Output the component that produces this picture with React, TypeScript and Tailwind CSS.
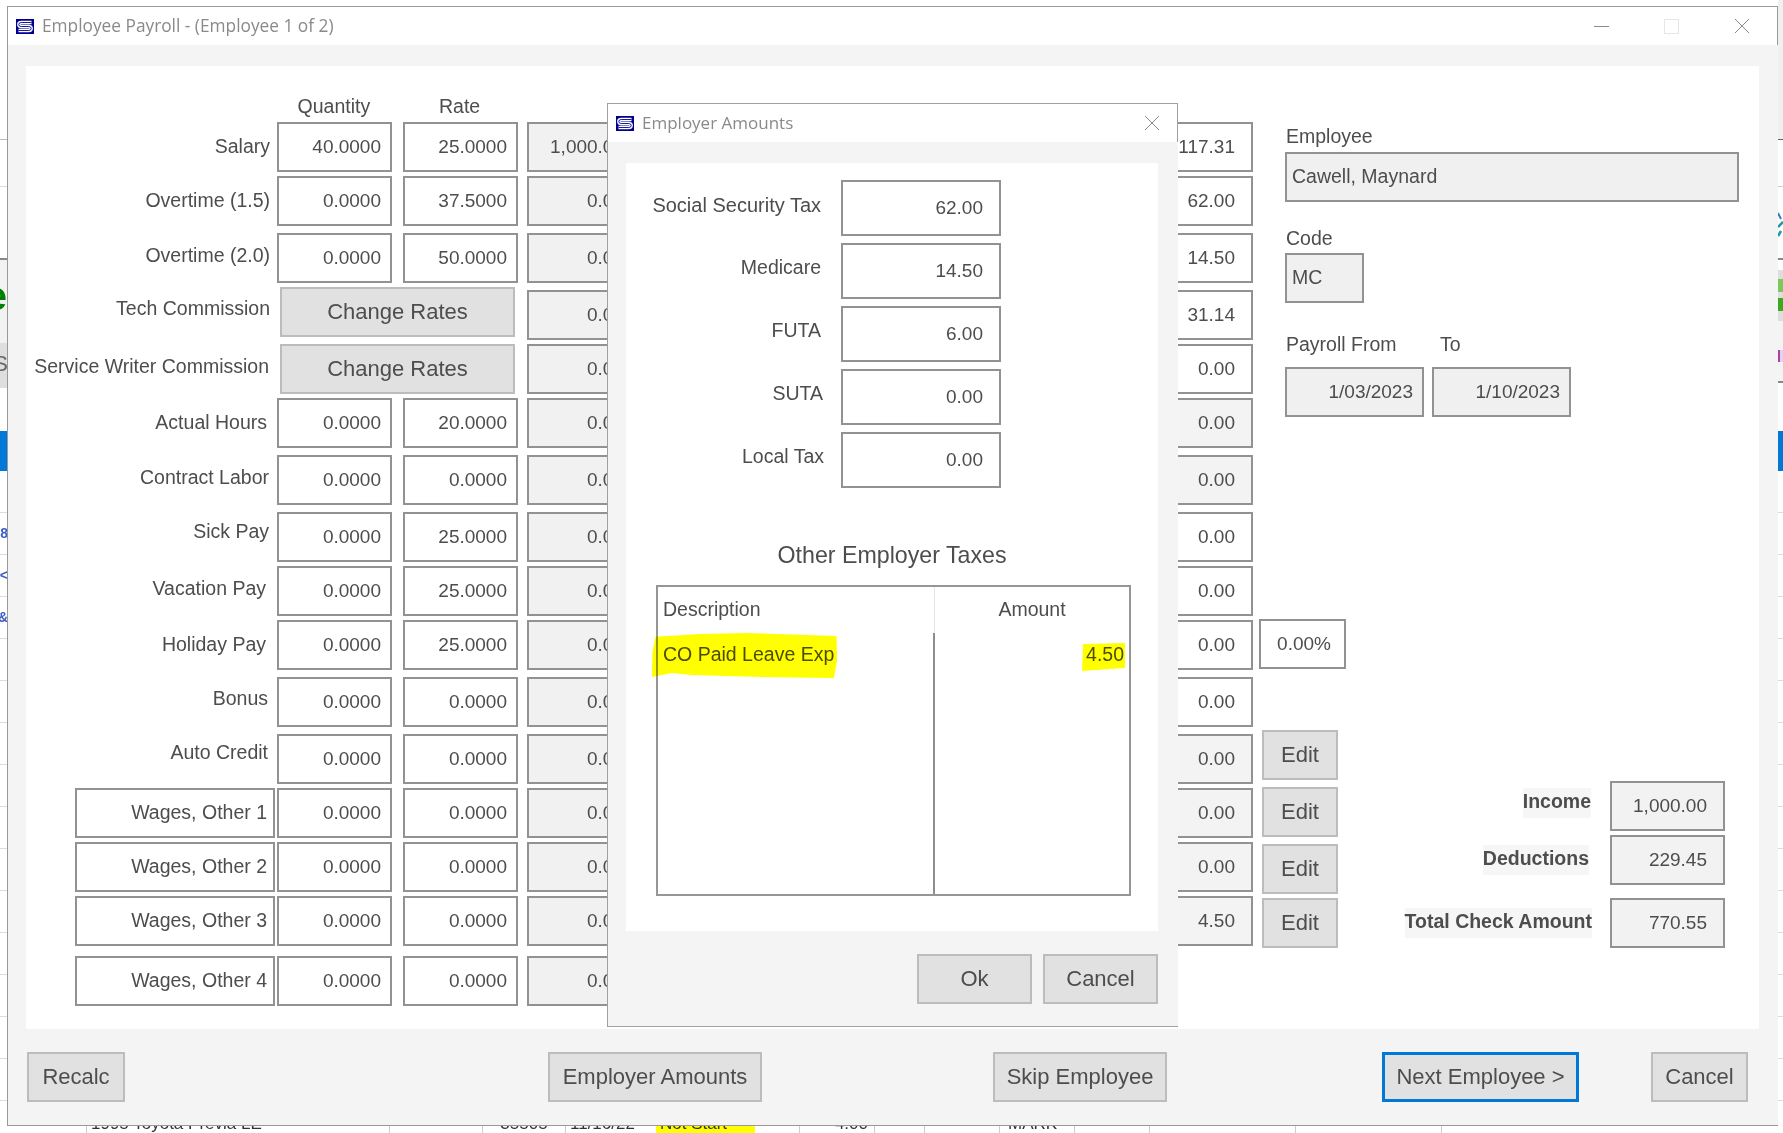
import type { ReactNode } from "react";

const TOP_GAPS = [
  "",
  "mt-[4px]",
  "mt-[7px]",
  "mt-[7px]",
  "mt-[4px]",
  "mt-[4px]",
  "mt-[7px]",
  "mt-[7px]",
  "mt-[4px]",
  "mt-[4px]",
  "mt-[7px]",
  "mt-[7px]",
  "mt-[4px]",
  "mt-[4px]",
  "mt-[4px]",
  "mt-[10px]",
];

interface PayRow {
  label: string;
  qty?: string;
  rate?: string;
  gap: string;
  labelClass: string;
  boxed?: boolean;
}

const PAY_ROWS: PayRow[] = [
  { label: "Salary", qty: "40.0000", rate: "25.0000", gap: "", labelClass: "pr-[7px]" },
  { label: "Overtime (1.5)", qty: "0.0000", rate: "37.5000", gap: "mt-[4px]", labelClass: "pr-[7px]" },
  { label: "Overtime (2.0)", qty: "0.0000", rate: "50.0000", gap: "mt-[7px]", labelClass: "pr-[7px] pb-[4px]" },
  { label: "Tech Commission", gap: "mt-[4px]", labelClass: "pr-[7px] pb-[6px]" },
  { label: "Service Writer Commission", gap: "mt-[7px]", labelClass: "pr-[8px] pb-[4px]" },
  { label: "Actual Hours", qty: "0.0000", rate: "20.0000", gap: "mt-[4px]", labelClass: "pr-[10px]" },
  { label: "Contract Labor", qty: "0.0000", rate: "0.0000", gap: "mt-[7px]", labelClass: "pr-[8px] pb-[4px]" },
  { label: "Sick Pay", qty: "0.0000", rate: "25.0000", gap: "mt-[7px]", labelClass: "pr-[8px] pb-[10px]" },
  { label: "Vacation Pay", qty: "0.0000", rate: "25.0000", gap: "mt-[4px]", labelClass: "pr-[11px] pb-[4px]" },
  { label: "Holiday Pay", qty: "0.0000", rate: "25.0000", gap: "mt-[4px]", labelClass: "pr-[11px]" },
  { label: "Bonus", qty: "0.0000", rate: "0.0000", gap: "mt-[7px]", labelClass: "pr-[9px] pb-[6px]" },
  { label: "Auto Credit", qty: "0.0000", rate: "0.0000", gap: "mt-[7px]", labelClass: "pr-[9px] pb-[12px]" },
  { label: "Wages, Other 1", qty: "0.0000", rate: "0.0000", gap: "mt-[4px]", labelClass: "", boxed: true },
  { label: "Wages, Other 2", qty: "0.0000", rate: "0.0000", gap: "mt-[4px]", labelClass: "", boxed: true },
  { label: "Wages, Other 3", qty: "0.0000", rate: "0.0000", gap: "mt-[4px]", labelClass: "", boxed: true },
  { label: "Wages, Other 4", qty: "0.0000", rate: "0.0000", gap: "mt-[10px]", labelClass: "", boxed: true },
];

const RIGHT_AMOUNTS = ["117.31", "62.00", "14.50", "31.14", "0.00", "0.00", "0.00", "0.00", "0.00", "0.00", "0.00", "0.00", "0.00", "0.00", "4.50"];

const DIALOG_FIELDS = [
  { label: "Social Security Tax", value: "62.00", labelClass: "pr-[20px] text-[20px]" },
  { label: "Medicare", value: "14.50", labelClass: "pr-[20px]" },
  { label: "FUTA", value: "6.00", labelClass: "pr-[20px]" },
  { label: "SUTA", value: "0.00", labelClass: "pr-[18px]" },
  { label: "Local Tax", value: "0.00", labelClass: "pr-[17px]" },
];

const STRIP_LINES = Array.from({ length: 15 }, (_, i) => i);

function LogoIcon() {
  return (
    <svg viewBox="0 0 18 15" width="18" height="15" className="shrink-0">
      <rect width="18" height="15" fill="#000090" />
      <path d="M15.5 3.5H5.2Q2.8 3.5 2.8 5.5T5.2 7.5H12.8Q15.2 7.5 15.2 9.5T12.8 11.5H2.5" fill="none" stroke="#fff" strokeWidth="3.4" />
      <path d="M15.5 3.5H5.2Q2.8 3.5 2.8 5.5T5.2 7.5H12.8Q15.2 7.5 15.2 9.5T12.8 11.5H2.5" fill="none" stroke="#000090" strokeWidth="0.9" />
    </svg>
  );
}

function CloseIcon() {
  return (
    <svg viewBox="0 0 16 16" width="16" height="16" className="shrink-0">
      <path d="M1 1L15 15M15 1L1 15" fill="none" stroke="#8a8a8a" strokeWidth="1" />
    </svg>
  );
}

function Box({ children, className = "" }: { children?: ReactNode; className?: string }) {
  return (
    <div className={`h-[50px] shrink-0 border-2 border-[#929292] flex items-center text-[19px] text-[#4d4d4d] ${className}`}>
      {children}
    </div>
  );
}

function Btn({ children, className = "" }: { children: ReactNode; className?: string }) {
  return (
    <div className={`h-[50px] shrink-0 border-2 border-[#bcbcbc] bg-[#e1e1e1] flex items-center justify-center pb-[2px] text-[22px] text-[#4d4d4d] ${className}`}>
      {children}
    </div>
  );
}

function Backdrop() {
  return (
    <div className="flex h-[1133px] w-[1783px]">
      {/* Left sliver of the job list behind the window */}
      <div className="w-[8px] shrink-0 flex flex-col overflow-hidden">
        <div className="h-[140px] shrink-0 border-b border-[#bbb]" />
        <div className="h-[47px] shrink-0 border-b border-[#ddd]" />
        <div className="h-[73px] shrink-0 border-b-2 border-[#888]" />
        <div className="h-[83px] shrink-0 bg-[#f2f2f2] flex justify-end pt-[16px] pr-[1px] text-[40px] leading-[40px] font-bold text-[#008000]">e</div>
        <div className="h-[45px] shrink-0 bg-[#dedede] flex justify-end pt-[6px] text-[22px] leading-[30px] text-[#666]">S</div>
        <div className="h-[43px] shrink-0" />
        <div className="h-[40px] shrink-0 bg-[#0078d7]" />
        <div className="h-[42px] shrink-0 border-b border-[#ddd]" />
        {STRIP_LINES.map((i) => (
          <div key={i} className="h-[42px] shrink-0 border-b border-[#ddd] flex items-center justify-end text-[14px] font-bold text-[#3b5cc4]">
            {i === 0 ? "8" : i === 1 ? "<" : i === 2 ? "&" : ""}
          </div>
        ))}
      </div>

      {/* Table row showing under the window */}
      <div className="flex-1 pt-[1103px] flex items-start text-[17px] text-[#333]">
        <div className="w-[78px] h-[42px] shrink-0" />
        <div className="w-[303px] h-[42px] shrink-0 border-l border-[#ccc] flex items-center pl-[4px]">1995 Toyota Previa LE</div>
        <div className="w-[93px] h-[42px] shrink-0 border-l border-[#ccc]" />
        <div className="w-[83px] h-[42px] shrink-0 border-l border-[#ccc] flex items-center justify-center">35505</div>
        <div className="w-[91px] h-[42px] shrink-0 border-l border-[#ccc] flex items-center pl-[4px]">11/16/22</div>
        <div className="w-[99px] h-[42px] shrink-0 bg-[#ffff00] flex items-center pl-[4px]">Not Start</div>
        <div className="w-[44px] h-[42px] shrink-0" />
        <div className="w-[75px] h-[42px] shrink-0 border-l border-[#ccc] flex items-center justify-end pr-[6px]">4.00</div>
        <div className="w-[50px] h-[42px] shrink-0 border-l border-[#ccc]" />
        <div className="w-[75px] h-[42px] shrink-0 border-l border-[#ccc]" />
        <div className="w-[75px] h-[42px] shrink-0 border-l border-[#ccc] flex items-center pl-[8px]">MARK</div>
        <div className="w-[75px] h-[42px] shrink-0 border-l border-[#ccc]" />
        <div className="w-[146px] h-[42px] shrink-0 border-l border-[#ccc]" />
        <div className="w-[146px] h-[42px] shrink-0 border-l border-[#ccc]" />
        <div className="w-[146px] h-[42px] shrink-0 border-l border-[#ccc]" />
      </div>

      {/* Right sliver */}
      <div className="w-[5px] shrink-0 flex flex-col overflow-hidden">
        <div className="h-[140px] shrink-0 bg-[#f0f0f0] border-b border-[#666]" />
        <div className="h-[47px] shrink-0 border-b border-[#ccc]" />
        <div className="h-[25px] shrink-0" />
        <svg viewBox="0 0 5 26" width="5" height="26" className="shrink-0">
          <path d="M0 1L3 7" fill="none" stroke="#2f7fc4" strokeWidth="2" />
          <path d="M0 15L5 10M0 24L3 19" fill="none" stroke="#1d9aa8" strokeWidth="2.5" />
        </svg>
        <div className="h-[22px] shrink-0 border-b-2 border-[#888]" />
        <div className="h-[10px] shrink-0" />
        <div className="h-[51px] shrink-0 bg-[#dedede] flex flex-col pt-[9px] gap-[6px]">
          <div className="h-[13px] bg-[#7cc85a]" />
          <div className="h-[13px] bg-[#3caa20]" />
        </div>
        <div className="h-[29px] shrink-0 bg-[#f4f4f4]" />
        <div className="h-[12px] shrink-0 flex">
          <div className="w-[2px] bg-[#b040a0]" />
          <div className="w-[3px] bg-[#dcd4f0]" />
        </div>
        <div className="h-[21px] shrink-0 bg-[#f4f4f4] border-b-2 border-[#888]" />
        <div className="h-[48px] shrink-0" />
        <div className="h-[40px] shrink-0 bg-[#0078d7]" />
        <div className="h-[42px] shrink-0 border-b border-[#ddd]" />
        {STRIP_LINES.map((i) => (
          <div key={i} className="h-[42px] shrink-0 border-b border-[#ddd]" />
        ))}
      </div>
    </div>
  );
}

function PayrollForm() {
  return (
    <div className="ml-[18px] mr-[19px] mt-[21px] h-[963px] bg-white flex shrink-0">
      {/* Labels, quantity and rate */}
      <div className="w-[491px] shrink-0 flex flex-col pt-[29px]">
        <div className="h-[27px] shrink-0 flex text-[19.5px] text-[#4d4d4d] leading-[22px]">
          <div className="w-[251px]" />
          <div className="w-[115px] text-center">Quantity</div>
          <div className="w-[11px]" />
          <div className="w-[115px] text-center">Rate</div>
        </div>
        {PAY_ROWS.map((r) => (
          <div key={r.label} className={`h-[50px] shrink-0 flex ${r.gap}`}>
            <div className="w-[251px] shrink-0 flex justify-end">
              {r.boxed ? (
                <Box className="w-[200px] mr-[2px] justify-end pr-[6px] !text-[19.5px] border-[#8a8a8a]">{r.label}</Box>
              ) : (
                <div className={`h-[50px] flex items-center text-[19.5px] text-[#4d4d4d] ${r.labelClass}`}>{r.label}</div>
              )}
            </div>
            {r.qty ? (
              <>
                <Box className="w-[115px] justify-end pr-[9px]">{r.qty}</Box>
                <Box className="w-[115px] ml-[11px] justify-end pr-[9px]">{r.rate}</Box>
              </>
            ) : (
              <Btn className="w-[235px] ml-[3px]">Change Rates</Btn>
            )}
          </div>
        ))}
      </div>

      {/* Total, mostly hidden by the dialog */}
      <div className="w-[115px] ml-[10px] shrink-0 flex flex-col pt-[56px]">
        {TOP_GAPS.map((gap, i) => (
          <Box key={i} className={`justify-end pr-[16px] bg-[#f1f1f1] whitespace-nowrap ${gap}`}>
            {i === 0 ? "1,000.00" : "0.00"}
          </Box>
        ))}
      </div>

      {/* Amounts column */}
      <div className="w-[115px] ml-[496px] shrink-0 flex flex-col pt-[56px]">
        {RIGHT_AMOUNTS.map((amount, i) => (
          <Box
            key={i}
            className={`justify-end pr-[16px] ${TOP_GAPS[i]} ${i === 5 || i === 6 || i > 10 ? "bg-[#f3f3f3]" : "bg-white"}`}
          >
            {amount}
          </Box>
        ))}
      </div>

      {/* Employee info, edit buttons, totals */}
      <div className="flex-1 flex flex-col pt-[58px] text-[19.5px] text-[#4d4d4d]">
        <div className="ml-[33px] h-[28px] leading-[24px]">Employee</div>
        <Box className="ml-[32px] w-[454px] pl-[5px] !text-[19.5px] bg-[#f0f0f0]">Cawell, Maynard</Box>
        <div className="ml-[33px] mt-[24px] h-[27px] leading-[24px]">Code</div>
        <Box className="ml-[32px] w-[79px] pl-[5px] !text-[19.5px] bg-[#f0f0f0]">MC</Box>
        <div className="ml-[33px] mt-[29px] h-[35px] leading-[24px] flex">
          <div className="w-[154px]">Payroll From</div>
          <div>To</div>
        </div>
        <div className="ml-[32px] flex gap-[8px]">
          <Box className="w-[139px] justify-end pr-[9px] bg-[#f0f0f0]">1/03/2023</Box>
          <Box className="w-[139px] justify-end pr-[9px] bg-[#f0f0f0]">1/10/2023</Box>
        </div>
        <Box className="ml-[6px] mt-[202px] w-[87px] justify-center pl-[3px]">0.00%</Box>
        <div className="mt-[61px] flex">
          <div className="ml-[9px] w-[76px] flex flex-col">
            <Btn>Edit</Btn>
            <Btn className="mt-[7px]">Edit</Btn>
            <Btn className="mt-[7px]">Edit</Btn>
            <Btn className="mt-[4px]">Edit</Btn>
          </div>
          <div className="ml-auto mr-[34px] mt-[51px] flex flex-col items-end">
            <div className="flex items-start">
              <div className="mt-[7px] h-[30px] bg-[#f6f6f6] font-bold flex items-center pb-[3px]">Income</div>
              <Box className="ml-[19px] w-[115px] justify-end pr-[16px] bg-[#f2f2f2]">1,000.00</Box>
            </div>
            <div className="flex items-start mt-[4px]">
              <div className="mt-[10px] h-[30px] bg-[#f6f6f6] font-bold flex items-center pb-[3px]">Deductions</div>
              <Box className="ml-[21px] w-[115px] justify-end pr-[16px] bg-[#f2f2f2]">229.45</Box>
            </div>
            <div className="flex items-start mt-[13px]">
              <div className="mt-[10px] h-[30px] bg-[#f6f6f6] font-bold flex items-center pb-[3px]">Total Check Amount</div>
              <Box className="ml-[18px] w-[115px] justify-end pr-[16px] bg-[#f2f2f2]">770.55</Box>
            </div>
          </div>
        </div>
      </div>
    </div>
  );
}

function EmployerDialog() {
  return (
    <div className="absolute left-[607px] top-[103px] w-[571px] h-[924px] bg-[#f4f4f4] border-l border-t border-b border-[#a0a0a0] flex flex-col">
      <div className="h-[38px] shrink-0 bg-white border-r border-[#a0a0a0] flex items-center pl-[8px] pr-[17px]">
        <LogoIcon />
        <span className="ml-[8px] font-['Open_Sans',sans-serif] text-[17px] text-[#8a8a8a]">Employer Amounts</span>
        <div className="ml-auto">
          <CloseIcon />
        </div>
      </div>

      <div className="mt-[21px] ml-[18px] w-[532px] h-[768px] shrink-0 bg-white pt-[17px] text-[19.5px] text-[#4d4d4d]">
        <div className="flex flex-col gap-[7px]">
          {DIALOG_FIELDS.map((f) => (
            <div key={f.label} className="flex h-[56px]">
              <div className={`w-[215px] shrink-0 flex items-center justify-end pb-[6px] ${f.labelClass}`}>{f.label}</div>
              <Box className="w-[160px] !h-[56px] justify-end pr-[16px]">{f.value}</Box>
            </div>
          ))}
        </div>

        <div className="mt-[53px] h-[28px] text-center text-[23.2px] leading-[28px]">Other Employer Taxes</div>

        <div className="relative mt-[16px] ml-[30px] w-[475px] h-[311px] border-2 border-[#969696] flex">
          <div className="w-[277px] shrink-0 flex flex-col">
            <div className="h-[46px] shrink-0 border-r border-[#e6e6e6] flex items-center pl-[5px]">Description</div>
            <div className="flex-1 border-r-2 border-[#8e8e8e] pl-[5px] pt-[9px] leading-[24px]">CO Paid Leave Exp</div>
          </div>
          <div className="flex-1 flex flex-col">
            <div className="h-[46px] shrink-0 flex items-center justify-center">Amount</div>
            <div className="flex-1 text-right pr-[5px] pt-[9px] leading-[24px]">4.50</div>
          </div>
          {/* Marker highlight drawn over the screenshot */}
          <svg viewBox="650 633 480 46" className="absolute left-[-8px] top-[46px] w-[480px] h-[46px] mix-blend-multiply pointer-events-none">
            <path
              d="M655.5 636.7L700 634L747 633L836.5 636L837 660L834 678L761 677L692 675L672 673L652 677L652.4 653Z M1083 644L1125 643L1125 668L1082 671Z"
              fill="#ffff00"
            />
          </svg>
        </div>
      </div>

      <div className="mt-[23px] flex justify-end gap-[11px] mr-[20px]">
        <Btn className="w-[115px]">Ok</Btn>
        <Btn className="w-[115px]">Cancel</Btn>
      </div>
    </div>
  );
}

export default function App() {
  return (
    <div className="relative w-[1783px] h-[1133px] overflow-hidden bg-white font-['Liberation_Sans',Arial,sans-serif]">
      <Backdrop />

      {/* Main window */}
      <div className="absolute left-[7px] top-[6px] w-[1771px] h-[1120px] bg-[#f4f4f4] border-l border-t border-b border-[#999] flex flex-col">
        <div className="h-[38px] shrink-0 bg-white border-r border-[#999] flex items-center pl-[8px] pr-[27px]">
          <LogoIcon />
          <span className="ml-[8px] font-['Open_Sans',sans-serif] text-[17.3px] text-[#8a8a8a]">Employee Payroll - (Employee 1 of 2)</span>
          <div className="ml-auto flex items-center">
            <div className="w-[15px] h-[1px] bg-[#8a8a8a]" />
            <div className="ml-[55px] w-[15px] h-[15px] border border-[#e6e6e6]" />
            <div className="ml-[55px]">
              <CloseIcon />
            </div>
          </div>
        </div>

        <PayrollForm />

        <div className="mt-[23px] ml-[19px] flex">
          <Btn className="w-[98px]">Recalc</Btn>
          <Btn className="ml-[423px] w-[214px]">Employer Amounts</Btn>
          <Btn className="ml-[231px] w-[174px]">Skip Employee</Btn>
          <Btn className="ml-[215px] w-[197px] !border-[3px] !border-[#0078d7]">Next Employee &gt;</Btn>
          <Btn className="ml-[72px] w-[97px]">Cancel</Btn>
        </div>
      </div>

      <EmployerDialog />
    </div>
  );
}
